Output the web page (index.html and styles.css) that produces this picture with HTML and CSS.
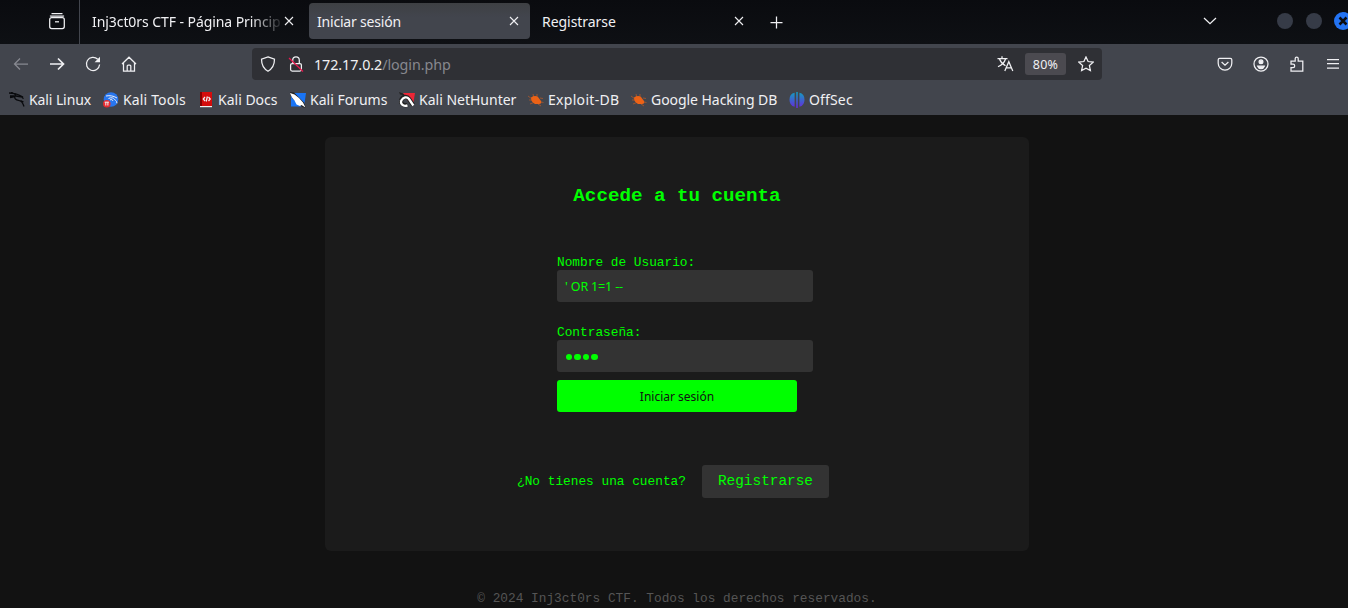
FILE: index.html
```html
<!DOCTYPE html>
<html lang="es">
<head>
<meta charset="utf-8">
<title>Iniciar sesión</title>
<link rel="stylesheet" href="styles.css">
</head>
<body>
<header class="browser">
  <div class="tabs">
    <div class="recent"><svg width="18" height="18" viewBox="0 0 18 18"><path d="M3.5 1.500h11M2.500 4.500v-.5h13v.5" /><rect x="1.700" y="5.500" width="14.600" height="11" rx="2"/><path d="M7 9.800h4"/></svg></div>
    <div class="tab first"><span class="label faded">Inj3ct0rs CTF - Página Princip</span><svg class="close" width="10" height="10" viewBox="0 0 10 10"><path d="M1 1l8 8M9 1l-8 8"/></svg></div>
    <div class="tab active"><span class="label">Iniciar sesión</span><svg class="close" width="10" height="10" viewBox="0 0 10 10"><path d="M1 1l8 8M9 1l-8 8"/></svg></div>
    <div class="tab last"><span class="label">Registrarse</span><svg class="close" width="10" height="10" viewBox="0 0 10 10"><path d="M1 1l8 8M9 1l-8 8"/></svg></div>
    <svg class="plus" width="13" height="13" viewBox="0 0 13 13"><path d="M6.500 .5v12M.5 6.500h12"/></svg>
    <svg class="chevron" width="14" height="8" viewBox="0 0 14 8"><path d="M1 1l6 5.700L13 1"/></svg>
    <span class="dot"></span><span class="dot"></span>
    <svg class="quit" width="18" height="18" viewBox="0 0 18 18"><circle cx="9" cy="9" r="9"/><path d="M5.500 5.500l7 7M12.500 5.500l-7 7"/></svg>
  </div>
  <div class="toolbar">
    <svg class="back" width="16" height="16" viewBox="0 0 16 16"><path d="M15 8H1.500M7 2.500L1.500 8 7 13.500"/></svg>
    <svg class="bold" width="16" height="16" viewBox="0 0 16 16"><path d="M1 8h13.500M9 2.500L14.500 8 9 13.500"/></svg>
    <svg width="16" height="16" viewBox="0 0 16 16"><path d="M12.700 3.300A6.600 6.600 0 1 0 14.600 8.500"/><path class="solid tip" d="M15 .8v5.400H9.600z"/></svg>
    <svg width="16" height="16" viewBox="0 0 16 16"><path d="M1 8l7-6.800L15 8M2.500 6.800v8.400h11V6.800M6.200 15V10q0-1 1-1h1.600q1 0 1 1v5"/></svg>
    <div class="address">
      <svg width="16" height="16" viewBox="0 0 16 16"><path d="M8 .8l6.500 2.300c0 6-1.600 9.500-6.500 12.100C3.100 12.600 1.500 9.100 1.500 3.100z"/></svg>
      <svg class="lock" width="16" height="16" viewBox="0 0 16 16"><rect x="2.600" y="7.500" width="10.800" height="7.500" rx="1.500"/><path d="M4.700 7V4.200a3.300 3.300 0 0 1 6.600 0V7"/><path class="slash" d="M1 2l14 13.500"/></svg>
      <span class="url">172.17.0.2<span>/login.php</span></span>
      <svg class="translate" width="17" height="16" viewBox="0 0 17 16"><path d="M.5 2.500h10M5 .3v2M2.500 3c1.200 3.300 3.200 5.300 6 6.700M8.500 3C7.500 6.500 4.800 9 1 10.800M7.800 15l4-9.300 4 9.300M9.300 11.800h5"/></svg>
      <span class="percent">80%</span>
      <svg width="16" height="16" viewBox="0 0 16 16"><path d="M8 .9l2.100 4.600 5.100.6-3.800 3.400 1 5.100L8 12.100l-4.400 2.500 1-5.100L.8 6.100l5.100-.6z"/></svg>
    </div>
    <svg width="16" height="16" viewBox="0 0 16 16"><path d="M2.700 2.300h10.600q1.500 0 1.500 1.500v3.500a6.800 6.800 0 0 1-13.600 0V3.800q0-1.500 1.500-1.500zM4.600 6L8 9.200 11.400 6"/></svg>
    <svg width="16" height="16" viewBox="0 0 16 16"><circle cx="8" cy="8" r="7"/><circle class="solid" cx="8" cy="5.800" r="1.900"/><path class="solid" d="M4.700 10.200h6.600q-.8 2.300-3.300 2.300t-3.300-2.300z"/></svg>
    <svg width="16" height="16" viewBox="0 0 16 16"><path d="M2 15.200V11.600h2a1.700 1.700 0 0 0 0-3.400H2V5h4.200V2.500a1.500 1.500 0 0 1 3 0V5h4.600v10.200z"/></svg>
    <svg class="menu" width="14" height="12" viewBox="0 0 14 12"><path d="M1 1.500h12M1 5.500h12M1 10h12"/></svg>
  </div>
  <nav class="bookmarks">
    <a class="w94"><svg width="16" height="16" viewBox="0 0 16 16"><path class="dragon" d="M0 1l6 .7 4 1.300 4 2-4-.5-3-.5-6 0M1 5.500l5-1M2 0l5 3M6 4c-1 2.500 1 4 3.500 4.300 2.500.4 4 1.200 5.500 6.200M8 4.500c2-.8 4.500-.2 6.500 2.200M11.500 8.500l3 1.500"/></svg><span>Kali Linux</span></a>
    <a class="w95"><svg width="16" height="16" viewBox="0 0 16 16"><circle cx="8" cy="7.500" r="7.300" fill="#2876ee"/><path class="thin" d="M3 4c4-.7 7-.3 11 2M5.500 6.500c3-1.500 5-.5 6 .800s2 1 2.500 4M7 8c1.500-1.200 2.500 0 3 1"/><circle cx="3.800" cy="11.800" r="3.800" fill="#e52b2f"/><path class="thin" d="M1.700 10.200h4.200M2.800 10.200v3.300M4.900 10.200v3.300"/></svg><span>Kali Tools</span></a>
    <a class="w92"><svg width="16" height="16" viewBox="0 0 16 16"><path fill="#d50c0c" d="M2 0h12v14H2z"/><path fill="#850000" d="M2 0h2v14H2z"/><path fill="#eee" d="M2 14h12v1.200H2z"/><path d="M7 5L5.300 7 7 9M10.500 5l1.700 2-1.700 2M9.400 4.500l-1.200 5"/></svg><span>Kali Docs</span></a>
    <a class="w109"><svg width="16" height="16" viewBox="0 0 16 16"><path fill="#1974f5" d="M1 1h15l-2 13.500H1z"/><path fill="#222" d="M0 0l4 .500 10 10 2 5.500-4-1-10-9z"/><path fill="#fff" d="M0 1l4.500 1.500 4.500 3.500 4 4.500 2.500 5-4-2.500-1.500 1-3.500-1.500-2-4L2 5.500z"/></svg><span>Kali Forums</span></a>
    <a class="w129"><svg width="16" height="16" viewBox="0 0 16 16"><path fill="#ed2636" d="M4 1h12l-2 12-5-4z"/><path fill="#222" d="M0 0l4 1.500 2 2-5-1z"/><path class="hook-edge" d="M2 8.500c1.500-4.500 6-4.500 8-1.500l4 6M2 9c0 3.500 4 5 6.500 3.500"/><path class="hook" d="M8.500 13.300C4 15 .800 11.500 2.500 8.300S8 4.300 10 7l4.300 6.500"/></svg><span>Kali NetHunter</span></a>
    <a class="w103"><svg width="16" height="16" viewBox="0 0 16 16"><path fill="#ec6216" d="M3 5.500q4-2.500 7-.5l3 4q1 3-2 3H7Q3 10 3 5.500z"/><path class="legs" d="M0 4l4 3M5 2l1 4M9 2v4M12 6l3 .5M1 8l4 0M2 12l5-2M13 10l2.500 .5M10 12l3 2"/></svg><span>Exploit-DB</span></a>
    <a class="w158"><svg width="16" height="16" viewBox="0 0 16 16"><path fill="#ec6216" d="M3 5.500q4-2.500 7-.5l3 4q1 3-2 3H7Q3 10 3 5.500z"/><path class="legs" d="M0 4l4 3M5 2l1 4M9 2v4M12 6l3 .5M1 8l4 0M2 12l5-2M13 10l2.500 .5M10 12l3 2"/></svg><span>Google Hacking DB</span></a>
    <a class="offsec"><svg width="16" height="16" viewBox="0 0 16 16"><defs><linearGradient id="off" gradientUnits="userSpaceOnUse" x1="0" y1="0" x2="0" y2="16"><stop stop-color="#119fc0"/><stop offset="1" stop-color="#6728dc"/></linearGradient></defs><path fill="url(#off)" d="M5.600 .8v14Q.5 13.500 .5 7.700T5.600 .8zM10.400 .8v14q5.100-1.300 5.100-7.100T10.400 .8zM7.200 0h1.600v16H7.200z"/></svg><span>OffSec</span></a>
  </nav>
</header>
<main class="page">
  <section class="card">
    <h2>Accede a tu cuenta</h2>
    <form class="login">
      <label for="user">Nombre de Usuario:</label>
      <input id="user" type="text" value="' OR 1=1 --">
      <label class="second" for="pass">Contraseña:</label>
      <div class="password" id="pass"><i></i><i></i><i></i><i></i></div>
      <button type="button">Iniciar sesión</button>
    </form>
    <div class="signup"><span>¿No tienes una cuenta?</span><a>Registrarse</a></div>
  </section>
  <footer>© 2024 Inj3ct0rs CTF. Todos los derechos reservados.</footer>
</main>
</body>
</html>
```
FILE: styles.css
```css
* { box-sizing: border-box; }
body { margin: 0; width: 1348px; height: 608px; overflow: hidden; background: #121212; font-family: "Noto Sans", sans-serif; }
svg { display: block; flex: none; fill: none; stroke: #f0f0f3; stroke-width: 1.25; }
svg .solid { fill: #f0f0f3; }
svg .tip { stroke: none; }
.browser { height: 115px; background: #42454d; color: #f0f0f3; font-size: 14px; }
.tabs { height: 44px; display: flex; align-items: center; background: linear-gradient(#0a0b0f, #0e1014); overflow: hidden; }
.recent { width: 80px; height: 44px; padding: 12px 0 0 48px; border-right: 1px solid #42454d; flex: none; }
.tab { height: 36px; display: flex; align-items: center; flex: none; border-radius: 4px; margin-top: -2px; }
.tab .label { flex: 1; white-space: nowrap; line-height: 22px; padding-top: 1px; letter-spacing: -.04px; }
.first { width: 214px; padding-left: 12px; }
.first .faded { flex: none; width: 189px; letter-spacing: -.07px; -webkit-mask-image: linear-gradient(to right, #000 84%, rgba(0, 0, 0, .1)); mask-image: linear-gradient(to right, #000 84%, rgba(0, 0, 0, .1)); }
.faded + .close { margin-left: 3px; }
.active { width: 221px; margin-left: 15px; padding: 0 11px 0 8px; background: linear-gradient(#3e4044, #42454d 40%); }
.active .label { letter-spacing: -.2px; }
.last { width: 202px; margin-left: 12px; }
.close { stroke-width: 1.1; }
.plus { margin-left: 26px; }
.chevron { margin: -3px 60px 0 420px; }
.dot { flex: none; width: 16px; height: 16px; margin-top: -2px; border-radius: 50%; background: #363b47; }
.chevron + .dot { margin-right: 13px; }
.quit { margin: -2px 0 0 12px; stroke: #0b0c10; stroke-width: 2.5; }
.quit circle { fill: #2373f3; stroke: none; }
.toolbar { height: 40px; padding-left: 13px; display: flex; align-items: center; gap: 20px; }
.back { stroke: #878991; }
.bold { stroke-width: 1.7; }
.address { width: 850px; height: 32px; margin: 0 95px; padding: 0 8px; display: flex; align-items: center; border-radius: 4px; background: #2f3035; flex: none; }
.lock { margin-left: 12px; }
svg .slash { stroke: #e6194f; }
.url { flex: 1; margin-left: 10px; font-size: 14.3px; letter-spacing: -.06px; }
.url span { color: #87888e; }
.percent { width: 41px; height: 22px; margin: 0 12px 0 11px; border-radius: 3px; background: #4b4a50; font-size: 12.500px; line-height: 23px; letter-spacing: .2px; text-align: center; }
.menu { margin-left: 1px; }
.bookmarks { height: 31px; padding: 1px 0 0 9px; display: flex; align-items: center; }
.bookmarks a { display: flex; align-items: center; gap: 4px; flex: none; white-space: nowrap; line-height: 20px; }
.w94 { width: 94px; } .w95 { width: 95px; } .w92 { width: 92px; } .w109 { width: 109px; }
.w129 { width: 129px; } .w103 { width: 103px; } .w158 { width: 158px; }
.w94 span { letter-spacing: -.1px; } .w95 span { letter-spacing: .15px; } .w103 span { letter-spacing: .3px; } .w158 span { letter-spacing: -.05px; } .offsec span { letter-spacing: .15px; }
.bookmarks svg path[fill], .bookmarks circle { stroke: none; }
.bookmarks svg .thin { stroke-width: 1; }
.bookmarks svg .hook { stroke: #fff; stroke-width: 2.3; }
.bookmarks svg .hook-edge { stroke: #222; stroke-width: 4.3; }
.bookmarks svg .dragon { stroke: #090a0d; stroke-width: 1.3; }
.bookmarks svg .legs { stroke: #ec6216; stroke-width: .5; }
.page { padding-top: 22px; color: #0f0; font: 12.8px/15px "Liberation Mono", monospace; }
.card { width: 704px; height: 414px; margin-left: 325px; padding-top: 48px; border-radius: 6px; background: #1b1b1b; }
h2 { margin: 0; font-size: 19.2px; line-height: 22px; text-align: center; }
.login { width: 256px; margin: 47px 0 0 232px; display: flex; flex-direction: column; }
label { height: 16px; line-height: 18px; }
.second { margin-top: 22px; }
input, .password { width: 256px; height: 32px; padding: 0 8px; border: 0; border-radius: 3px; background: #333; color: #0f0; }
input { font: 12.500px "Noto Sans", sans-serif; letter-spacing: -.15px; outline: none; }
.password { display: flex; align-items: center; gap: 2.200px; padding-top: 2px; padding-left: 9px; }
.password i { width: 6.300px; height: 6.300px; border-radius: 50%; background: #0f0; }
button { width: 240px; height: 32px; margin-top: 8px; padding: 0; border: 0; border-radius: 3px; background: #0f0; color: #121212; font: 12px "Noto Sans", sans-serif; }
.signup { display: flex; align-items: center; margin: 53px 0 0 192px; }
.signup a { width: 127px; height: 33px; margin-left: 16px; border-radius: 3px; background: #333; font-size: 14.4px; line-height: 32px; text-align: center; }
footer { margin-top: 40px; padding-left: 6px; color: #555; text-align: center; }
```
